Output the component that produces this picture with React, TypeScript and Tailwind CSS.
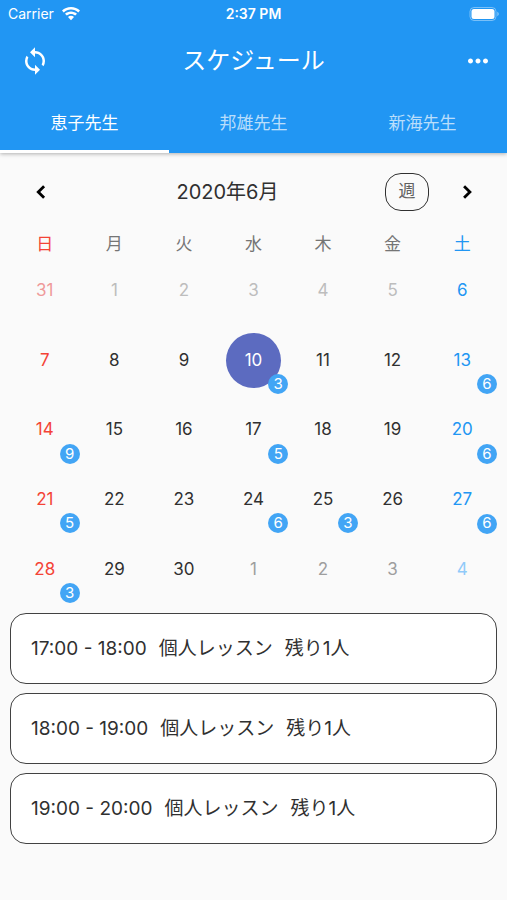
import { useState } from 'react'
import { MdMoreHoriz, MdSync } from 'react-icons/md'
import clsx from 'clsx'

const TEACHERS = ['恵子先生', '邦雄先生', '新海先生']
const WEEKDAYS = ['日', '月', '火', '水', '木', '金', '土']

type Day = { day: number; outside?: 'prev' | 'next'; count?: number }

const WEEKS: Day[][] = [
  [
    { day: 31, outside: 'prev' },
    { day: 1, outside: 'prev' },
    { day: 2, outside: 'prev' },
    { day: 3, outside: 'prev' },
    { day: 4, outside: 'prev' },
    { day: 5, outside: 'prev' },
    { day: 6 },
  ],
  [{ day: 7 }, { day: 8 }, { day: 9 }, { day: 10, count: 3 }, { day: 11 }, { day: 12 }, { day: 13, count: 6 }],
  [{ day: 14, count: 9 }, { day: 15 }, { day: 16 }, { day: 17, count: 5 }, { day: 18 }, { day: 19 }, { day: 20, count: 6 }],
  [{ day: 21, count: 5 }, { day: 22 }, { day: 23 }, { day: 24, count: 6 }, { day: 25, count: 3 }, { day: 26 }, { day: 27, count: 6 }],
  [
    { day: 28, count: 3 },
    { day: 29 },
    { day: 30 },
    { day: 1, outside: 'next' },
    { day: 2, outside: 'next' },
    { day: 3, outside: 'next' },
    { day: 4, outside: 'next' },
  ],
]

const LESSONS = [
  { time: '17:00 - 18:00', title: '個人レッスン', left: '残り1人' },
  { time: '18:00 - 19:00', title: '個人レッスン', left: '残り1人' },
  { time: '19:00 - 20:00', title: '個人レッスン', left: '残り1人' },
]

function dayColor(d: Day, col: number) {
  if (col === 0) return d.outside ? 'text-[#ef9a9a]' : 'text-[#f44336]'
  if (col === 6) return d.outside ? 'text-[#90caf9]' : 'text-[#2196f3]'
  if (d.outside === 'prev') return 'text-[#bdbdbd]'
  if (d.outside === 'next') return 'text-[#9e9e9e]'
  return 'text-[#303030]'
}

export default function App() {
  const [teacher, setTeacher] = useState(0)
  const [selected, setSelected] = useState(10)

  return (
    <div className="min-h-screen bg-[#fafafa] font-[Inter,'Noto_Sans_CJK_JP',sans-serif] text-[#303030]">
      <header className="relative bg-[#2196f3] text-white shadow-[0_1px_4px_rgba(0,0,0,0.3)]">
        <StatusBar />
        <div className="grid grid-cols-[1fr_auto_1fr] items-center h-[65px] px-[14px]">
          <button type="button" aria-label="更新" className="justify-self-start px-[6px]">
            <MdSync className="size-[30px]" />
          </button>
          <h1 className="text-2xl font-normal">スケジュール</h1>
          <button type="button" aria-label="メニュー" className="justify-self-end">
            <MdMoreHoriz className="size-[30px]" />
          </button>
        </div>
        <div role="tablist" className="grid grid-cols-3">
          {TEACHERS.map((name, i) => (
            <button
              key={name}
              type="button"
              role="tab"
              aria-selected={i === teacher}
              onClick={() => setTeacher(i)}
              className={clsx(
                'h-15 pt-1 border-b-3 text-[17px]',
                i === teacher ? 'border-white' : 'border-transparent text-white/70',
              )}
            >
              {name}
            </button>
          ))}
        </div>
      </header>

      <main className="px-[10px] pt-5">
        <div className="flex items-center">
          <button type="button" aria-label="前の月" className="flex justify-center w-15 text-black">
            <Chevron points="15.500,7 10.500,12 15.500,17" />
          </button>
          <h2 className="flex-1 text-center text-xl font-normal">2020年6月</h2>
          <button type="button" className="w-11 h-[38px] mr-2 rounded-2xl border border-[#303030] text-[17px] text-[#616161]">
            週
          </button>
          <button type="button" aria-label="次の月" className="flex justify-center w-15 text-black">
            <Chevron points="9.500,7 14.500,12 9.500,17" />
          </button>
        </div>

        <table className="w-full table-fixed mt-[21px]">
          <thead>
            <tr>
              {WEEKDAYS.map((w, i) => (
                <th
                  key={w}
                  className={clsx(
                    'p-0 text-[17px] leading-6 font-normal',
                    i === 0 ? 'text-[#f44336]' : i === 6 ? 'text-[#2196f3]' : 'text-[#757575]',
                  )}
                >
                  {w}
                </th>
              ))}
            </tr>
          </thead>
          <tbody>
            {WEEKS.map((week, row) => (
              <tr key={row}>
                {week.map((d, col) => {
                  const active = !d.outside && d.day === selected
                  return (
                    <td key={col} className="p-0">
                      <div className="relative flex items-center justify-center aspect-square">
                        <button
                          type="button"
                          onClick={() => !d.outside && setSelected(d.day)}
                          className={clsx(
                            'size-[55px] rounded-full text-[17px]',
                            active ? 'bg-[#5c6bc0] text-white' : dayColor(d, col),
                          )}
                        >
                          {d.day}
                        </button>
                        {d.count && (
                          <span className="absolute right-0 bottom-px flex items-center justify-center size-5 rounded-full bg-[#42a5f5] text-[15px] text-white">
                            {d.count}
                          </span>
                        )}
                      </div>
                    </td>
                  )
                })}
              </tr>
            ))}
          </tbody>
        </table>

        <ul className="flex flex-col gap-[9px] mt-[9px] pb-6">
          {LESSONS.map((l) => (
            <li key={l.time}>
              <button
                type="button"
                className="flex items-center gap-3 w-full h-[71px] px-5 pt-0.5 rounded-2xl border border-[#424242] bg-white text-[19px]"
              >
                <span>{l.time}</span>
                <span>{l.title}</span>
                <span>{l.left}</span>
              </button>
            </li>
          ))}
        </ul>
      </main>
    </div>
  )
}

function Chevron({ points }: { points: string }) {
  return (
    <svg viewBox="0 0 24 24" className="size-7" aria-hidden="true">
      <polyline points={points} fill="none" stroke="currentColor" strokeWidth="2.400" />
    </svg>
  )
}

function StatusBar() {
  return (
    <div className="grid grid-cols-3 items-center h-7 px-2 text-sm">
      <div className="flex items-center gap-2">
        <span>Carrier</span>
        <svg viewBox="0 0 18 14" className="w-[18px] h-[14px]" fill="currentColor" aria-hidden="true">
          <path d="M9 0C5.500 0 2.300 1.350 0 3.600L1.750 5.400C3.600 3.600 6.200 2.500 9 2.500s5.400 1.100 7.250 2.900L18 3.600C15.700 1.350 12.500 0 9 0Z" />
          <path d="M9 4.400c-2.350 0-4.450.9-6 2.350l1.800 1.850C5.900 7.550 7.350 6.900 9 6.900s3.100.65 4.200 1.700L15 6.750C13.450 5.300 11.350 4.400 9 4.400Z" />
          <path d="M9 8.800c-1.150 0-2.200.45-3 1.150l3 3.350 3-3.350c-.8-.7-1.850-1.150-3-1.150Z" />
        </svg>
      </div>
      <span className="text-center font-semibold">2:37 PM</span>
      <svg viewBox="0 0 30 14" className="justify-self-end w-[30px] h-[14px]" aria-hidden="true">
        <rect x="1" y="0.500" width="26" height="13" rx="4" fill="none" stroke="#fff" strokeOpacity="0.4" />
        <rect x="2.500" y="2" width="23" height="10" rx="2.500" fill="#fff" />
        <path d="M28.300 4.800v4.400c.9-.4 1.500-1.200 1.500-2.200s-.6-1.800-1.500-2.200Z" fill="#fff" fillOpacity="0.45" />
      </svg>
    </div>
  )
}
